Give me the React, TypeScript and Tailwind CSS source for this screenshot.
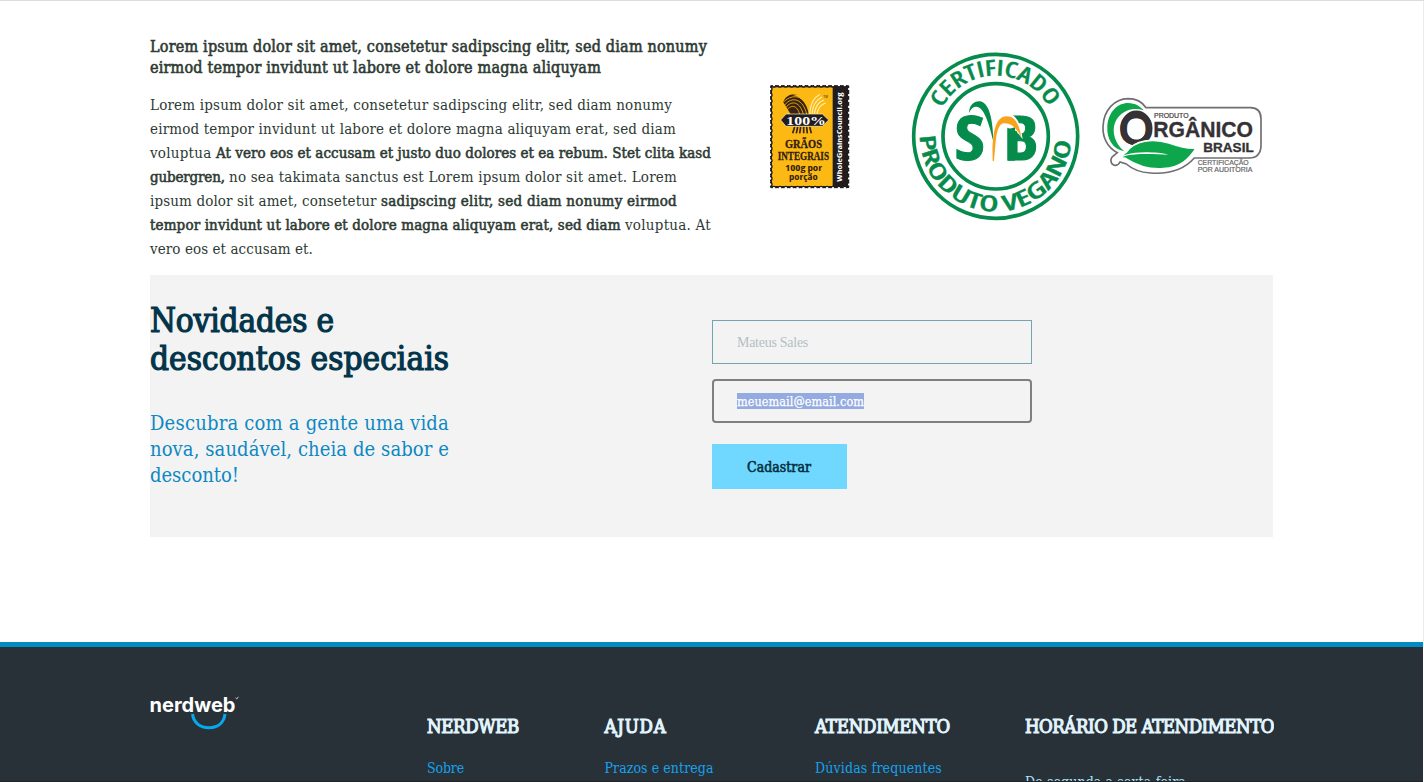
import { useLayoutEffect, useRef } from "react";

/* A single line of text, tracked so that it spans the given width. */
function Line({ w, className = "", children }: { w: number; className?: string; children: string }) {
  const ref = useRef<HTMLSpanElement>(null);
  useLayoutEffect(() => {
    const el = ref.current;
    if (!el) return;
    el.style.letterSpacing = "0px";
    const natural = el.getBoundingClientRect().width;
    el.style.letterSpacing = `${(w - natural) / children.length}px`;
  }, [w, children]);
  return (
    <span ref={ref} className={`inline-block whitespace-pre ${className}`}>
      {children}
    </span>
  );
}

const strong = "[-webkit-text-stroke:0.55px_currentColor]";

function WholeGrainStamp() {
  const xs = Array.from({ length: 13 }, (_, i) => 42 + i * 17.7);
  const ys = Array.from({ length: 17 }, (_, i) => 42 + i * 17.9);
  return (
    <svg viewBox="0 0 300 375" className="h-[125px] w-[100px] shrink-0">
      <rect x="31" y="31" width="236" height="308" fill="#211c1d" />
      <rect x="36" y="37" width="182" height="296" fill="#fdb913" />
      {xs.map((x) => (
        <g key={x} fill="#fff" stroke="#211c1d" strokeWidth="4">
          <circle cx={x} cy="30" r="6" />
          <circle cx={x} cy="340" r="6" />
        </g>
      ))}
      {ys.map((y) => (
        <g key={y} fill="#fff" stroke="#211c1d" strokeWidth="4">
          <circle cx="30" cy={y} r="6" />
          <circle cx="268" cy={y} r="6" />
        </g>
      ))}
      <path d="M12 12H288V358H12ZM30 30V340H268V30Z" fill="#fff" fillRule="evenodd" />
      <path d="M70 82C76 56 112 48 132 72C144 86 147 101 147 118H92Z" fill="#3a2410" />
      <g fill="none" stroke="#fdb913" strokeWidth="2.5">
        <path d="M74 90C96 62 130 72 140 118" />
        <path d="M77 98C96 73 121 82 130 118" />
        <path d="M80 106C95 86 112 92 119 118" />
        <path d="M72 80C98 54 134 64 144 96" />
      </g>
      <path d="M98 60C116 52 137 64 147 88C158 69 165 60 180 55C186 68 191 76 197 84C178 86 167 96 160 118H146C143 86 120 63 98 60Z" fill="#fdb913" />
      <g fill="none" stroke="#fff0b5" strokeWidth="3.5">
        <path d="M180 58C162 67 151 87 149 116" />
        <path d="M186 66C170 74 158 91 156 116" />
        <path d="M192 75C178 80 166 95 163 116" />
        <path d="M197 84C184 88 174 100 171 116" />
      </g>
      <path d="M62 135L78 117H187L206 135L187 154H78Z" fill="#211c1d" stroke="#fff2bd" strokeWidth="2" />
      <text x="79" y="149" fontFamily="Liberation Serif" fontWeight="700" fontSize="37" fill="#fff" textLength="119" lengthAdjust="spacingAndGlyphs">100%</text>
      <path d="M104 156L98 175M113 156L109 175M122 156L119 175M131 156V175M140 156L142 175M149 156L154 175" stroke="#3a2410" strokeWidth="5" />
      <text x="190" y="69" fontFamily="Liberation Sans" fontSize="9" fill="#211c1d">TM</text>
      <g fill="#30200e" stroke="#30200e" strokeWidth="1" fontFamily="Liberation Serif" fontWeight="700">
        <text x="75" y="220" fontSize="40" textLength="111" lengthAdjust="spacingAndGlyphs">GRÃOS</text>
        <text x="53" y="255" fontSize="40" textLength="154" lengthAdjust="spacingAndGlyphs">INTEGRAIS</text>
      </g>
      <g fill="#30200e" fontFamily="Open Sans" fontWeight="700" fontSize="27">
        <text x="75" y="287" textLength="111" lengthAdjust="spacingAndGlyphs">100g por</text>
        <text x="87" y="315" textLength="86" lengthAdjust="spacingAndGlyphs">porção</text>
      </g>
      <text transform="translate(246 320) rotate(-90)" fontFamily="Open Sans" fontWeight="700" fontSize="23" fill="#fff" textLength="268" lengthAdjust="spacingAndGlyphs">WholeGrainsCouncil.org</text>
    </svg>
  );
}

function VeganSeal() {
  return (
    <svg viewBox="0 0 570 570" className="h-[190px] w-[190px] shrink-0">
      <defs>
        <path id="seal-top" d="M126 205A181 181 0 0 1 448 205" />
        <path id="seal-bottom" d="M60 287A227 227 0 0 0 514 289" />
      </defs>
      <g fill="none" stroke="#058b4b" strokeWidth="11">
        <circle cx="287" cy="289" r="246" />
        <circle cx="287" cy="289" r="158" />
      </g>
      <g fill="#058b4b" fontFamily="Open Sans" fontWeight="600" fontSize="66" stroke="#058b4b" strokeWidth="1">
        <text textLength="392" lengthAdjust="spacingAndGlyphs">
          <textPath href="#seal-top" textLength="392" lengthAdjust="spacingAndGlyphs">CERTIFICADO</textPath>
        </text>
        <text textLength="698" lengthAdjust="spacingAndGlyphs">
          <textPath href="#seal-bottom" textLength="698" lengthAdjust="spacingAndGlyphs">PRODUTO VEGANO</textPath>
        </text>
      </g>
      <g fill="#058b4b" stroke="#058b4b" strokeWidth="3" fontFamily="Open Sans" fontWeight="700" fontSize="180">
        <text x="164" y="361" textLength="90" lengthAdjust="spacingAndGlyphs">S</text>
        <text x="311" y="361" textLength="104" lengthAdjust="spacingAndGlyphs">B</text>
      </g>
      <path d="M275 366C271 305 278 228 320 222C348 218 362 250 368 298L350 274L318 262V366Z" fill="#fff" />
      <path d="M323 268L345 262V362H323Z" fill="#058b4b" />
      <path d="M207 219C208 195 222 183 239 184C266 187 279 233 280 304C266 248 253 206 233 201C220 198 213 207 207 219Z" fill="#058b4b" />
      <path d="M278 363C276 292 282 229 320 229C347 229 359 258 364 291C348 261 330 247 310 250C286 257 288 310 282 363Z" fill="#faa21b" />
    </svg>
  );
}

function OrganicSeal() {
  const outline =
    "M153 68H466Q498 68 498 102V180Q498 219 462 219H298C267 254 218 268 166 264C135 262 111 252 94 237L75 231C69 243 55 245 49 233C43 218 56 212 67 203C35 187 23 155 24 125C26 74 59 42 99 41C123 41 141 50 153 68Z";
  return (
    <svg viewBox="0 0 525 300" className="h-[100px] w-[175px] shrink-0">
      <path d={outline} fill="#fff" stroke="#706e70" strokeWidth="5" />
      <path d="M88 199C52 193 35 160 37 124C40 80 68 54 99 54C121 54 137 65 146 76C111 64 76 78 61 111C49 139 59 175 88 199Z" fill="#0da64b" />
      <ellipse cx="124" cy="129" rx="39" ry="44" fill="none" stroke="#353134" strokeWidth="17" />
      <text x="70" y="179" fontFamily="Liberation Sans" fontWeight="700" fontSize="140" fill="#353134" textLength="108" lengthAdjust="spacingAndGlyphs">O</text>
      <g fill="#353134" stroke="#353134" strokeWidth="1" fontFamily="Liberation Sans" fontWeight="700">
        <text x="175" y="156" fontSize="65" textLength="299" lengthAdjust="spacingAndGlyphs">RGÂNICO</text>
        <text x="325" y="200" fontSize="41" textLength="151" lengthAdjust="spacingAndGlyphs">BRASIL</text>
      </g>
      <g fontFamily="Liberation Sans" fontSize="20" stroke="currentColor" strokeWidth="0.6" fill="currentColor">
        <text x="177" y="100" className="text-[#454244]" textLength="104" lengthAdjust="spacingAndGlyphs">PRODUTO</text>
        <text x="308" y="241" className="text-[#69676a]" textLength="153" lengthAdjust="spacingAndGlyphs">CERTIFICAÇÃO</text>
        <text x="308" y="262" className="text-[#69676a]" textLength="164" lengthAdjust="spacingAndGlyphs">POR AUDITORIA</text>
      </g>
      <path d="M74 218C82 210 88 206 94 201C118 166 175 158 222 174C253 185 278 192 304 189C282 222 257 249 205 251C158 255 124 241 91 220Z" fill="#0da64b" stroke="#fff" strokeWidth="5" />
      <path d="M60 229C72 210 110 202 150 202C180 202 200 204 220 209C180 207 120 204 90 213C78 217 70 224 60 229Z" fill="#fff" />
    </svg>
  );
}

function NerdwebLogo() {
  return (
    <svg viewBox="0 0 96 36" className="h-9 w-24 overflow-visible">
      <text x="-0.5" y="15.5" fontFamily="Inter" fontWeight="700" fontSize="19.5" fill="#fff" textLength="86" lengthAdjust="spacingAndGlyphs">nerdweb</text>
      <path d="M42.5 18C43.5 26.5 50 31.7 59 31.7S74 26.5 75 18" fill="none" stroke="#05a9ee" strokeWidth="3" />
      <path d="M85.5 1.8L86.8 3L88.3 .8" fill="none" stroke="#fff" strokeWidth=".7" />
    </svg>
  );
}

function FooterTitle({ w, children }: { w: number; children: string }) {
  return (
    <h3 className="h-6 text-[18.5px] leading-6 font-normal text-[#e2f5ff]">
      <Line w={w} className="[-webkit-text-stroke:1.1px_currentColor]">{children}</Line>
    </h3>
  );
}

function FooterColumn({ title, titleWidth, link, linkWidth, className }: { title: string; titleWidth: number; link: string; linkWidth: number; className: string }) {
  return (
    <div className={className}>
      <FooterTitle w={titleWidth}>{title}</FooterTitle>
      <a className="mt-[17px] block h-6 text-[14px] leading-6 text-[#14a2ed]">
        <Line w={linkWidth}>{link}</Line>
      </a>
    </div>
  );
}

export default function App() {
  return (
    <div className="flex h-[782px] w-[1424px] flex-col overflow-hidden border-t border-[#dcdcdc] bg-white font-['DejaVu_Serif_Condensed','DejaVu_Serif',serif] [font-stretch:condensed]">
      <div className="flex min-h-0 flex-1 flex-col border-r border-[#ececec]">
        <main className="ml-[150px] w-[1123px] flex-1">
          <section className="flex h-[274px]">
            <div className="w-[562px] shrink-0 pt-[35px] text-[#2d3a33]">
              <h2 className="text-[16px] leading-[21px] font-normal">
                <div className="h-[21px]"><Line w={557} className={strong}>Lorem ipsum dolor sit amet, consetetur sadipscing elitr, sed diam nonumy</Line></div>
                <div className="h-[21px]"><Line w={451} className={strong}>eirmod tempor invidunt ut labore et dolore magna aliquyam</Line></div>
              </h2>
              <div className="mt-[15px] text-[15px] leading-6">
                <div className="h-6"><Line w={522}>Lorem ipsum dolor sit amet, consetetur sadipscing elitr, sed diam nonumy</Line></div>
                <div className="h-6"><Line w={526}>eirmod tempor invidunt ut labore et dolore magna aliquyam erat, sed diam</Line></div>
                <div className="flex h-6">
                  <Line w={66}>{"voluptua "}</Line>
                  <Line w={495} className={strong}>At vero eos et accusam et justo duo dolores et ea rebum. Stet clita kasd</Line>
                </div>
                <div className="flex h-6">
                  <Line w={79} className={strong}>{"gubergren, "}</Line>
                  <Line w={448}>no sea takimata sanctus est Lorem ipsum dolor sit amet. Lorem</Line>
                </div>
                <div className="flex h-6">
                  <Line w={231}>{"ipsum dolor sit amet, consetetur "}</Line>
                  <Line w={296} className={strong}>sadipscing elitr, sed diam nonumy eirmod</Line>
                </div>
                <div className="flex h-6">
                  <Line w={475} className={strong}>{"tempor invidunt ut labore et dolore magna aliquyam erat, sed diam "}</Line>
                  <Line w={86}>voluptua. At</Line>
                </div>
                <div className="h-6"><Line w={163}>vero eos et accusam et.</Line></div>
              </div>
            </div>
            <div className="flex items-start pl-12">
              <div className="pt-[74px]"><WholeGrainStamp /></div>
              <div className="ml-10 pt-[39px]"><VeganSeal /></div>
              <div className="ml-[5px] pt-[84px]"><OrganicSeal /></div>
            </div>
          </section>

          <section className="flex h-[262px] bg-[#f3f3f3]">
            <div className="w-[562px] pt-[27px]">
              <h1 className="text-[33px] leading-[38px] font-normal text-[#02344a]">
                <div className="h-[38px]"><Line w={184} className="[-webkit-text-stroke:1.2px_currentColor]">Novidades e</Line></div>
                <div className="h-[38px]"><Line w={299} className="[-webkit-text-stroke:1.2px_currentColor]">descontos especiais</Line></div>
              </h1>
              <div className="mt-8 text-[20px] leading-[26px] text-[#0c88c3]">
                <div className="h-[26px]"><Line w={299}>Descubra com a gente uma vida</Line></div>
                <div className="h-[26px]"><Line w={299}>nova, saudável, cheia de sabor e</Line></div>
                <div className="h-[26px]"><Line w={89}>desconto!</Line></div>
              </div>
            </div>
            <form className="flex w-80 flex-col items-start pt-[45px]">
              <div className="flex h-11 w-80 items-center border border-[#74a3b2] pl-6 text-[13px] text-[#b4bfc3]">
                <Line w={71} className="font-['Liberation_Serif','Times_New_Roman',serif] text-[14px]">Mateus Sales</Line>
              </div>
              <div className="mt-[15px] flex h-11 w-80 items-center rounded-[4px] border-2 border-[#7f7f7f] pl-[23px] text-[12.5px]">
                <span className="flex h-4 items-center bg-[#93abe0] leading-[18px] text-white">
                  <Line w={127} className="pt-px [-webkit-text-stroke:0.25px_currentColor]">meuemail@email.com</Line>
                </span>
              </div>
              <button type="button" className="mt-[21px] flex h-[45px] w-[135px] items-center bg-[#70d8ff] pt-[2px] pl-[35px] text-[14px] text-[#022f3d]">
                <Line w={64} className={strong}>Cadastrar</Line>
              </button>
            </form>
          </section>
        </main>
      </div>

      <footer className="mr-px h-[140px] shrink-0 border-t-[5px] border-b border-t-[#008bc5] border-b-[#222326] bg-[#293138]">
        <div className="ml-[150px] flex w-[1123px]">
          <div className="w-[277px] shrink-0 pt-[49px]"><NerdwebLogo /></div>
          <FooterColumn className="w-[177.5px] shrink-0 pt-[68px]" title="NERDWEB" titleWidth={92} link="Sobre" linkWidth={37} />
          <FooterColumn className="w-[210.5px] shrink-0 pt-[68px]" title="AJUDA" titleWidth={62} link="Prazos e entrega" linkWidth={109} />
          <FooterColumn className="w-[210px] shrink-0 pt-[68px]" title="ATENDIMENTO" titleWidth={135} link="Dúvidas frequentes" linkWidth={127} />
          <div className="h-[134px] shrink-0 overflow-hidden pt-[68px]">
            <FooterTitle w={249}>HORÁRIO DE ATENDIMENTO</FooterTitle>
            <p className="mt-[31px] h-6 text-[14px] leading-6 text-[#a9e6ff]">
              <Line w={161}>De segunda a sexta-feira</Line>
            </p>
          </div>
        </div>
      </footer>
    </div>
  );
}
